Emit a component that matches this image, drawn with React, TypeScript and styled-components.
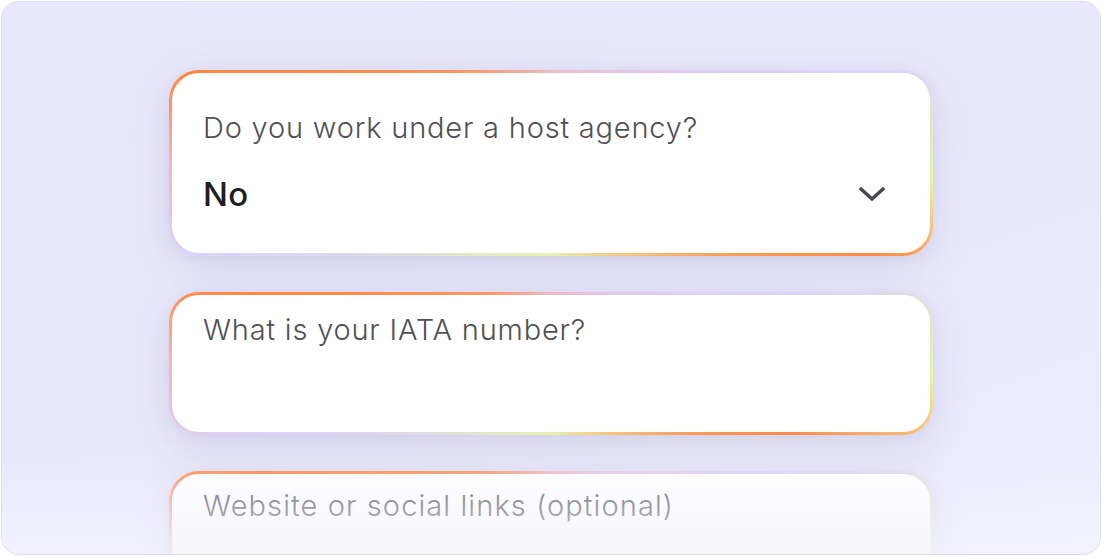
import * as React from 'react'
import styled, { createGlobalStyle } from 'styled-components'

const GlobalStyle = createGlobalStyle`
    html, body {
        margin: 0;
        padding: 0;
        background: #ffffff;
    }
    body {
        font-family: Inter, "Noto Sans", "Liberation Sans", sans-serif;
        -webkit-font-smoothing: antialiased;
    }
`

const App = () => (
    <>
        <GlobalStyle />
        <Frame>
            <Form>
                <Field $padTop={37} $padBottom={39}>
                    <Label>Do you work under a host agency?</Label>
                    <SelectRow>
                        <Value>No</Value>
                        <Chevron viewBox="0 0 26 14" aria-hidden="true">
                            <path d="M2 2 L13 12 L24 2" />
                        </Chevron>
                    </SelectRow>
                </Field>
                <Field $padTop={17} $padBottom={0}>
                    <Label>What is your IATA number?</Label>
                    <EmptyInput $height={84} />
                </Field>
                <Field $padTop={14} $padBottom={0}>
                    <Label $wide>Website or social links (optional)</Label>
                    <EmptyInput $height={84} />
                </Field>
            </Form>
            <Fade />
        </Frame>
    </>
)

const Frame = styled.div`
    position: relative;
    box-sizing: border-box;
    width: 1100px;
    height: 554px;
    margin: 1px;
    border: 1px solid #dedef2;
    border-radius: 18px;
    overflow: hidden;
    background: linear-gradient(160deg, #e8e7fb 0%, #eae9fc 60%, #eeedfd 100%);
`

const Form = styled.div`
    display: flex;
    flex-direction: column;
    align-items: center;
    gap: 36px;
    padding-top: 68px;
`

const Field = styled.div<{ $padTop: number; $padBottom: number }>`
    box-sizing: border-box;
    width: 764px;
    flex: 0 0 auto;
    display: flex;
    flex-direction: column;
    padding: ${p => p.$padTop}px 44px ${p => p.$padBottom}px 31px;
    border: 3px solid transparent;
    border-radius: 30px;
    background:
        linear-gradient(#ffffff, #ffffff) padding-box,
        conic-gradient(
            from 0deg,
            #eebac6 0deg,
            #e4c6e6 40deg,
            #dcd3fb 74deg,
            #e7f5ad 92deg,
            #f4c47e 100deg,
            #ff8a45 106deg,
            #f6c07c 135deg,
            #e8f2b0 180deg,
            #e2e8c8 225deg,
            #dcd3fb 256deg,
            #f0b8b8 270deg,
            #ff8744 283deg,
            #f89a6c 320deg,
            #eebac6 360deg
        ) border-box;
    box-shadow: 0 10px 40px rgba(70, 70, 130, 0.14), 0 2px 8px rgba(70, 70, 130, 0.05);
`

const Label = styled.div<{ $wide?: boolean }>`
    font-size: 29px;
    line-height: 36px;
    font-weight: 350;
    color: #505056;
    letter-spacing: ${p => (p.$wide ? '1.1px' : '0.8px')};
    white-space: nowrap;
`

const SelectRow = styled.div`
    display: flex;
    align-items: center;
    justify-content: space-between;
    margin-top: 28px;
`

const Value = styled.div`
    font-size: 33px;
    line-height: 40px;
    font-weight: 500;
    color: #1f1f23;
    letter-spacing: 0.4px;
`

const Chevron = styled.svg`
    width: 26px;
    height: 14px;
    fill: none;
    stroke: #48484d;
    stroke-width: 3.4;
    stroke-linecap: square;
    stroke-linejoin: miter;
    margin-right: 1px;
`

const EmptyInput = styled.div<{ $height: number }>`
    height: ${p => p.$height}px;
`

const Fade = styled.div`
    position: absolute;
    left: 0;
    right: 0;
    bottom: 0;
    height: 100px;
    pointer-events: none;
    background: linear-gradient(
        to bottom,
        rgba(244, 243, 255, 0) 0%,
        rgba(244, 243, 255, 0.4) 45%,
        rgba(244, 243, 255, 0.65) 80%,
        rgba(244, 243, 255, 0.75) 100%
    );
`

export default App
